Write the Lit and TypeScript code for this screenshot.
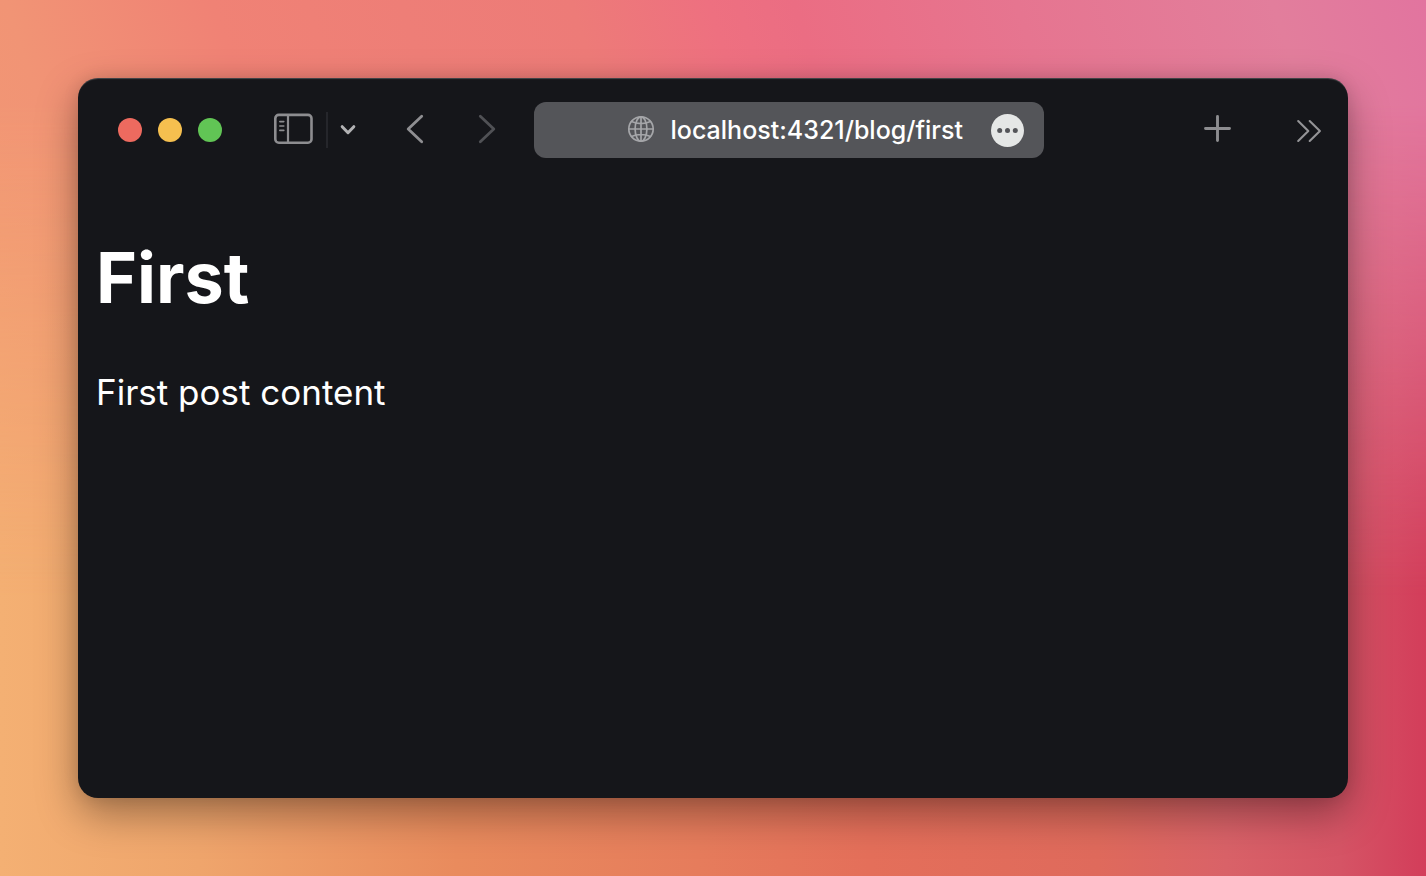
import { LitElement, html, css } from "lit";
import { customElement, property } from "lit/decorators.js";

@customElement("browser-toolbar")
class BrowserToolbar extends LitElement {
  @property() url = "";

  static styles = css`
    :host {
      display: flex;
      align-items: center;
      padding: 24px 26px 24px 40px;
      font-family: Inter, "Liberation Sans", sans-serif;
    }
    button {
      flex: none;
      display: block;
      margin: 0;
      padding: 0;
      border: 0;
      background: none;
      color: #8d8d90;
    }
    svg {
      display: block;
      fill: none;
      stroke: currentColor;
      stroke-linecap: round;
      stroke-linejoin: round;
    }
    .lights {
      display: flex;
      gap: 16px;
      margin-right: 52px;
    }
    .light {
      width: 24px;
      height: 24px;
      border-radius: 50%;
    }
    .close { background: #ed6a5f; }
    .minimize { background: #f5bf4f; }
    .zoom { background: #61c555; }
    .divider {
      flex: none;
      width: 2px;
      height: 36px;
      margin: 0 12px;
      background: #25262b;
    }
    .menu { color: #b2b2b4; margin-right: 50px; }
    .back { margin-right: 54px; color: #8f8f92; }
    .forward { margin-right: 38px; color: #505155; }
    .address {
      flex: 1;
      min-width: 0;
      height: 56px;
      display: flex;
      align-items: center;
      justify-content: flex-end;
      padding: 0 20px;
      box-sizing: border-box;
      border-radius: 12px;
      background: #545559;
      margin-right: 159px;
    }
    .globe { flex: none; color: #a5a6a9; margin-right: 16px; }
    .url {
      field-sizing: content;
      min-width: 0;
      margin: 0 28px 0 0;
      padding: 0;
      border: 0;
      outline: 0;
      background: none;
      color: #fff;
      font: 500 25px/32px Inter, "Liberation Sans", sans-serif;
    }
    .plus { margin-right: 65px; }
    .overflow { color: #949497; }
  `;

  render() {
    return html`
      <div class="lights">
        <button class="light close" aria-label="Close"></button>
        <button class="light minimize" aria-label="Minimize"></button>
        <button class="light zoom" aria-label="Zoom"></button>
      </div>
      <button aria-label="Sidebar">
        <svg width="40" height="56" viewBox="0 0 40 56" stroke-width="2.6">
          <rect x="1.3" y="12.900" width="36.200" height="27.800" rx="3.5" />
          <path d="M14 13v28" stroke-width="2.2" />
          <path d="M5.8 19.6h4M5.8 24h4M5.8 28.4h4" stroke-width="1.6" />
        </svg>
      </button>
      <span class="divider"></span>
      <button class="menu" aria-label="Sidebar menu">
        <svg width="16" height="56" viewBox="0 0 16 56" stroke-width="3">
          <path d="M2.2 24.700 8 30.700l5.800-6" />
        </svg>
      </button>
      <button class="back" aria-label="Back">
        <svg width="18" height="56" viewBox="0 0 18 56" stroke-width="2.8">
          <path d="M15.700 14.200 2.200 27l13.500 12.800" />
        </svg>
      </button>
      <button class="forward" aria-label="Forward">
        <svg width="18" height="56" viewBox="0 0 18 56" stroke-width="2.8">
          <path d="M2.300 14.200 15.800 27 2.300 39.800" />
        </svg>
      </button>
      <div class="address">
        <svg class="globe" width="28" height="56" viewBox="0 0 28 56" stroke-width="1.7">
          <circle cx="14" cy="27" r="12.200" />
          <ellipse cx="14" cy="27" rx="5.900" ry="12.200" />
          <path d="M14 14.800v24.400M1.800 27h24.400M4.500 19.500c5.500 2.700 13.500 2.700 19 0M4.500 34.500c5.500-2.700 13.500-2.700 19 0" />
        </svg>
        <input class="url" type="text" aria-label="Address" spellcheck="false" .value=${this.url} />
        <button aria-label="Page options">
          <svg width="33" height="56" viewBox="0 0 33 56">
            <circle cx="16.500" cy="28.500" r="16.500" fill="#e5e7e6" stroke="none" />
            <g fill="#545559" stroke="none">
              <circle cx="8.700" cy="28.500" r="2.500" />
              <circle cx="16.500" cy="28.500" r="2.500" />
              <circle cx="24.300" cy="28.500" r="2.500" />
            </g>
          </svg>
        </button>
      </div>
      <button class="plus" aria-label="New tab">
        <svg width="28" height="56" viewBox="0 0 28 56" stroke-width="2.900">
          <path d="M14.500 14.500v24M2.500 26.500h24" />
        </svg>
      </button>
      <button class="overflow" aria-label="More">
        <svg width="26" height="56" viewBox="0 0 26 56" stroke-width="2.100">
          <path d="M2.200 19 12.300 29 2.200 39M13.700 19l10.200 10-10.200 10" />
        </svg>
      </button>
    `;
  }
}

@customElement("app-root")
class AppRoot extends LitElement {
  static styles = css`
    :host {
      display: flex;
      position: relative;
      isolation: isolate;
      box-sizing: border-box;
      min-height: 100vh;
      padding: 78px;
      font-family: Inter, "Liberation Sans", sans-serif;
      color: #fff;
      background: linear-gradient(
        90deg,
        #f4b073 0%,
        #efa56c 14%,
        #e98b5d 32%,
        #e67c5c 49%,
        #e46f5a 61%,
        #df6a5c 77%,
        #d96268 86%,
        #d55465 94%,
        #d33d5a 100%
      );
    }
    /* Upper half of the wallpaper, fading into the warmer lower half */
    :host::before {
      content: "";
      position: absolute;
      inset: 0;
      z-index: -1;
      background: linear-gradient(
        72deg,
        #f39a72 4%,
        #f19475 17%,
        #f08275 29%,
        #ee7e77 40%,
        #ed7b78 50%,
        #ee7080 58%,
        #eb6d83 63%,
        #e67590 76%,
        #e27e9c 91%,
        #e2749f 100%
      );
      mask-image: linear-gradient(#000 12%, transparent 68%);
    }
    .window {
      flex: 1;
      min-width: 0;
      border-radius: 20px;
      background: #15161a;
      box-shadow:
        inset 0 2px 1px -1px #ffffff38,
        0 16px 40px #00000059,
        0 0 16px #0000001a;
    }
    .page {
      padding: 52px 18px;
    }
    h1 {
      margin: 0 0 48px;
      font-size: 70px;
      line-height: 88px;
      font-weight: 700;
    }
    p {
      margin: 0;
      font-size: 35px;
      line-height: 44px;
    }
  `;

  render() {
    return html`
      <div class="window">
        <browser-toolbar url="localhost:4321/blog/first"></browser-toolbar>
        <main class="page">
          <h1>First</h1>
          <p>First post content</p>
        </main>
      </div>
    `;
  }
}
